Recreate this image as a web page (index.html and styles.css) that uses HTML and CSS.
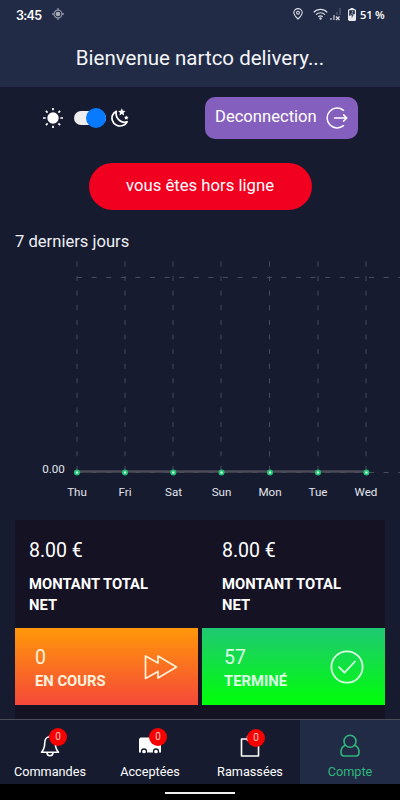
FILE: index.html
```html
<!DOCTYPE html>
<html lang="fr">
<head>
    <meta charset="UTF-8">
    <meta name="viewport" content="width=device-width, initial-scale=1.0">
    <title>Compte</title>
    <link rel="stylesheet" href="styles.css">
</head>
<body>
    <div class="app">
        <header class="header">
            <div class="status-bar">
                <span class="clock">3:45</span>
                <svg class="gps" width="12" height="12" viewBox="0 0 12 12">
                    <circle cx="6" cy="6" r="3.9" fill="none" stroke="#8f94a5" stroke-width="1.2"/>
                    <circle cx="6" cy="6" r="2.3" fill="#a9adba"/>
                    <path d="M6 0v2M6 10v2M0 6h2M10 6h2" stroke="#8f94a5" stroke-width="1.3"/>
                </svg>
                <div class="status-icons">
                    <svg class="pin" width="10" height="12" viewBox="0 0 10 12" fill="none" stroke="#d9dce6" stroke-width="1.1">
                        <path d="M5 11C2.5 8.5.8 6.5.8 4.7a4.2 4.1 0 0 1 8.4 0C9.2 6.5 7.5 8.5 5 11z"/>
                        <circle cx="5" cy="4.7" r="1.4"/>
                    </svg>
                    <svg class="wifi" width="15" height="12" viewBox="0 0 15 12" fill="none" stroke="#d9dce6" stroke-width="1.2">
                        <path d="M.7 4.4C4.5.4 10.5.4 14.3 4.4M3 6.7c2.6-2.6 6.4-2.6 9 0M5.3 8.8c1.3-1.2 3.1-1.2 4.4 0"/>
                        <circle cx="7.5" cy="10.5" r=".6" fill="#d9dce6"/>
                    </svg>
                    <svg class="signal" width="12" height="13" viewBox="0 0 12 13" fill="none">
                        <path d="M1 10v2M4 7v5" stroke="#c0c4d0" stroke-width="1.3"/>
                        <path d="M7 4v3M10 0v7" stroke="#535b73" stroke-width="1.3"/>
                        <path d="M6 8.5l3.5 3.5M9.5 8.5L6 12" stroke="#d9dce6" stroke-width="1.2"/>
                    </svg>
                    <svg class="battery" width="8" height="13" viewBox="0 0 8 13">
                        <path d="M2.5 0h3v1.5h-3z" fill="#e8eaf0"/>
                        <rect x=".6" y="1.6" width="6.8" height="10.8" rx="1" fill="none" stroke="#e8eaf0" stroke-width="1.2"/>
                        <path d="M1 8l6-2v6H1z" fill="#e8eaf0"/>
                        <path d="M4.8 3L2.3 7.5h1.5L3.5 11l2.4-4.5H4.4z" fill="#222b45" stroke="#e8eaf0" stroke-width=".4"/>
                    </svg>
                    <span class="percent">51 %</span>
                </div>
            </div>
            <h1 class="title">Bienvenue nartco delivery...</h1>
        </header>

        <main class="content">
            <div class="toolbar">
                <div class="theme-switch">
                    <svg class="sun" width="20" height="20" viewBox="0 0 20 20">
                        <circle cx="10" cy="10" r="5.7" fill="#fff"/>
                        <path d="M10 0v2.2M10 17.8V20M0 10h2.7M17.3 10H20M2.9 2.9l1.7 1.7M15.4 15.4l1.7 1.7M2.9 17.1l1.7-1.7M15.4 4.6l1.7-1.7" stroke="#fff" stroke-width="1.7"/>
                    </svg>
                    <span class="switch"><span class="knob"></span></span>
                    <svg class="moon" width="18" height="20" viewBox="0 0 18 20">
                        <path d="M5.3 3.4C1.7 5 .3 9 1.3 12.2c1.3 4.6 6.6 7 11 5.1 1.7-.7 3-2 3.8-3.5-2.5 1-5.3.5-7.5-1.3-2.7-2.2-3.9-5.7-3.3-9.1z" fill="none" stroke="#fff" stroke-width="1.7" stroke-linejoin="round"/>
                        <path d="M10.8.3l1.1 2.4 2.6.3-1.9 1.8.5 2.6-2.3-1.3-2.3 1.3.5-2.6L7.1 3l2.6-.3z" fill="#fff"/>
                        <path d="M15.3 7.5l.7 1.3 1.5.2-1 1.1.2 1.5-1.4-.7-1.4.7.2-1.5-1-1.1 1.5-.2z" fill="#fff"/>
                    </svg>
                </div>
                <button class="logout">
                    <span>Deconnection</span>
                    <svg width="22" height="22" viewBox="0 0 22 22" fill="none" stroke="#fff" stroke-width="1.5" stroke-linecap="round" stroke-linejoin="round">
                        <path d="M17.5 3.3A10 10 0 1 0 17.5 18.7"/>
                        <path d="M8.5 11h12.3M17.6 7.9l3.2 3.1-3.2 3.1"/>
                    </svg>
                </button>
            </div>

            <button class="offline">vous êtes hors ligne</button>

            <h2 class="chart-title">7 derniers jours</h2>
            <svg class="chart" width="400" height="250" viewBox="0 0 400 250">
                <g class="grid">
                    <path d="M77 6.5V217M125 6.5V217M173 6.5V217M221 6.5V217M269.5 6.5V217M318 6.5V217M366 6.5V217"/>
                    <path d="M77 22.5H400M77 217.5H400"/>
                </g>
                <path class="line" d="M77 216.5H366"/>
                <g class="dots">
                    <circle cx="77" cy="217.5" r="2.2"/>
                    <circle cx="125" cy="217.5" r="2.2"/>
                    <circle cx="173.3" cy="217.5" r="2.2"/>
                    <circle cx="221.5" cy="217.5" r="2.2"/>
                    <circle cx="270" cy="217.5" r="2.2"/>
                    <circle cx="318" cy="217.5" r="2.2"/>
                    <circle cx="366.4" cy="217.5" r="2.2"/>
                </g>
                <g class="labels">
                    <text x="53.5" y="217.5">0.00</text>
                    <text x="77" y="240.5">Thu</text>
                    <text x="125" y="240.5">Fri</text>
                    <text x="173.5" y="240.5">Sat</text>
                    <text x="221.5" y="240.5">Sun</text>
                    <text x="270" y="240.5">Mon</text>
                    <text x="318" y="240.5">Tue</text>
                    <text x="366" y="240.5">Wed</text>
                </g>
            </svg>

            <section class="stats">
                <div class="totals">
                    <div class="total">
                        <div class="value">8.00 €</div>
                        <div class="label">MONTANT TOTAL NET</div>
                    </div>
                    <div class="total">
                        <div class="value">8.00 €</div>
                        <div class="label">MONTANT TOTAL NET</div>
                    </div>
                </div>
                <div class="cards">
                    <div class="card card-progress">
                        <div class="card-text">
                            <div class="value">0</div>
                            <div class="label">EN COURS</div>
                        </div>
                        <svg width="34" height="26" viewBox="0 0 34 26" fill="none" stroke="#fff0d8" stroke-width="1.7" stroke-linejoin="round">
                            <path d="M1.5 2v22.5L14 17.5V24l18.5-11L14 2v7z"/>
                        </svg>
                    </div>
                    <div class="card card-done">
                        <div class="card-text">
                            <div class="value">57</div>
                            <div class="label">TERMINÉ</div>
                        </div>
                        <svg width="34" height="34" viewBox="0 0 34 34" fill="none" stroke="#d8ffe4" stroke-width="1.8" stroke-linecap="round" stroke-linejoin="round">
                            <circle cx="17" cy="17" r="15.6"/>
                            <path d="M9 17.2l5.5 5.5L25 11.5"/>
                        </svg>
                    </div>
                </div>
            </section>
        </main>

        <nav class="tabs">
            <div class="tab">
                <div class="tab-icon">
                    <svg width="20" height="24" viewBox="0 0 20 24" fill="none" stroke="#fff" stroke-width="1.6" stroke-linejoin="round">
                        <path d="M10 2.5V1M10 2.8C6.5 2.8 4.7 5.5 4.7 9c0 5-1 6.8-3.2 9.2h17c-2.2-2.4-3.2-4.2-3.2-9.2 0-3.5-1.8-6.2-5.3-6.2z"/>
                        <path d="M7 18.5a3 3.2 0 0 0 6 0"/>
                    </svg>
                    <span class="badge">0</span>
                </div>
                <span>Commandes</span>
            </div>
            <div class="tab">
                <div class="tab-icon">
                    <svg width="24" height="24" viewBox="0 0 24 24">
                        <path d="M2.5 3.5H15V6h4.5l3.5 5v7.5H1V5z" fill="#fff"/>
                        <circle cx="6" cy="17.5" r="2.5" fill="#fff" stroke="#171b2f" stroke-width="1.3"/>
                        <circle cx="18" cy="17.5" r="2.5" fill="#fff" stroke="#171b2f" stroke-width="1.3"/>
                    </svg>
                    <span class="badge">0</span>
                </div>
                <span>Acceptées</span>
            </div>
            <div class="tab">
                <div class="tab-icon">
                    <svg width="20" height="24" viewBox="0 0 20 24" fill="none" stroke="#fff" stroke-width="1.6" stroke-linejoin="round">
                        <path d="M7.5 5h-6v17h17V5H13M7.5 2.5H13v4H7.5z"/>
                    </svg>
                    <span class="badge badge-low">0</span>
                </div>
                <span>Ramassées</span>
            </div>
            <div class="tab active">
                <div class="tab-icon">
                    <svg width="20" height="24" viewBox="0 0 20 24" fill="none" stroke="#2eb77c" stroke-width="1.6" stroke-linejoin="round">
                        <circle cx="10" cy="7.3" r="6"/>
                        <path d="M5.3 11.2C2.2 12.3 1 15 1 18.3c0 2.6 1 3.7 3 3.7h12c2 0 3-1.1 3-3.7 0-3.3-1.2-6-4.3-7.1"/>
                    </svg>
                </div>
                <span>Compte</span>
            </div>
        </nav>
        <div class="system-bar"><span class="handle"></span></div>
    </div>
</body>
</html>
```

FILE: styles.css
```css
* {
    box-sizing: border-box;
}

body {
    margin: 0;
    background: #171b2f;
    color: #fff;
    font-family: Roboto, "Liberation Sans", sans-serif;
}

.app {
    width: 400px;
    height: 800px;
    display: flex;
    flex-direction: column;
    overflow: hidden;
}

/* header */
.header {
    height: 88px;
    flex: none;
    background: #222b45;
    border-bottom: 1px solid #171733;
}

.status-bar {
    height: 28px;
    display: flex;
    align-items: center;
    padding: 0 15px 0 16px;
}

.clock {
    width: 36px;
    font: 600 12.5px Inter, sans-serif;
    letter-spacing: -0.7px;
    padding-top: 2px;
}

.status-icons {
    display: flex;
    align-items: center;
    margin-left: auto;
}

.wifi {
    margin-left: 10px;
}

.signal {
    margin-left: 2px;
}

.battery {
    margin-left: 6px;
}

.percent {
    width: 25px;
    margin-left: 4px;
    font: 600 11.2px "Open Sans", sans-serif;
    letter-spacing: -0.2px;
    white-space: nowrap;
}

.title {
    margin: 18px 0 0;
    font-size: 20.5px;
    line-height: 24px;
    font-weight: 400;
    text-align: center;
    color: #f3f5fa;
}

/* content */
.content {
    flex: 1;
    min-height: 0;
    overflow: hidden;
    display: flex;
    flex-direction: column;
}

.toolbar {
    height: 42px;
    flex: none;
    margin: 9px 42px 0 43px;
    display: flex;
    align-items: center;
    justify-content: space-between;
}

.theme-switch {
    display: flex;
    align-items: center;
}

.switch {
    width: 32px;
    height: 14px;
    margin: 0 5px 0 11px;
    border-radius: 7px;
    background: #eee;
    display: flex;
    align-items: center;
    justify-content: flex-end;
}

.knob {
    width: 20px;
    height: 20px;
    border-radius: 50%;
    background: #077aff;
}

.logout {
    width: 153px;
    height: 42px;
    padding: 0 10px;
    border: 0;
    border-radius: 10px;
    background: #855fbe;
    color: #fff;
    font: 400 16.6px Roboto, sans-serif;
    display: flex;
    align-items: center;
    justify-content: space-between;
}

.logout span {
    padding-bottom: 3px;
}

.offline {
    width: 223px;
    height: 47px;
    flex: none;
    margin: 24px auto 0;
    padding: 0 0 2px;
    border: 0;
    border-radius: 24px;
    background: #f10020;
    color: #fff;
    font: 400 16.7px Roboto, sans-serif;
}

.chart-title {
    margin: 22px 0 0 15px;
    font-size: 16.6px;
    line-height: 20px;
    font-weight: 400;
    color: #eef0f5;
}

.chart {
    flex: none;
    margin-top: 3px;
}

.grid path {
    fill: none;
    stroke: #474b5d;
    stroke-width: 1;
    stroke-dasharray: 5 9.6;
}

.line {
    stroke: #4b4b59;
    stroke-width: 2.6;
}

.dots circle {
    fill: #b5f5d0;
    stroke: #20bd72;
    stroke-width: 1.7;
}

.labels text {
    fill: #e3e5ec;
    font-size: 11.6px;
    text-anchor: middle;
}

/* stats */
.stats {
    flex: none;
    height: 220px;
    margin: 15px 15px 0;
    background: #151224;
}

.totals {
    height: 108px;
    display: grid;
    grid-template-columns: 1fr 1fr;
}

.total {
    padding: 19px 40px 0 14px;
}

.total + .total {
    padding-left: 22px;
}

.value {
    font-size: 19.5px;
    line-height: 24px;
    font-weight: 400;
}

.label {
    font-size: 14.8px;
    line-height: 20.5px;
    font-weight: 700;
}

.total .label {
    margin-top: 11px;
}

.cards {
    display: grid;
    grid-template-columns: 183px 183px;
    justify-content: space-between;
}

.card {
    height: 77px;
    padding: 0 20px;
    display: flex;
    align-items: center;
    justify-content: space-between;
}

.card-text {
    padding-top: 5px;
}

.card .label {
    line-height: 22px;
}

.card-progress {
    background: linear-gradient(#ff9809, #f5483a);
    color: #fff2dd;
}

.card-done {
    padding-left: 22px;
    padding-right: 21px;
    background: linear-gradient(#20c873, #00ff08);
    color: #dcffe5;
}

/* bottom tabs */
.tabs {
    flex: none;
    height: 65px;
    display: flex;
    border-top: 1px solid #4c4d5b;
    background: #171b2f;
}

.tab {
    flex: 1;
    display: flex;
    flex-direction: column;
    align-items: center;
    padding-top: 14px;
    font-size: 12.7px;
    line-height: 16px;
}

.tab.active {
    background: #222b45;
    color: #2eb77c;
}

.tab-icon {
    position: relative;
    height: 24px;
    margin-bottom: 6px;
}

.tab-icon svg {
    display: block;
}

.badge {
    position: absolute;
    top: -6px;
    left: 50%;
    margin-left: -1px;
    width: 18px;
    height: 18px;
    border-radius: 50%;
    background: #f80000;
    color: #ffc9c9;
    font-size: 10px;
    line-height: 18px;
    text-align: center;
}

.badge-low {
    top: -5px;
    margin-left: -3px;
}

.system-bar {
    flex: none;
    height: 16px;
    background: #000;
    display: flex;
    align-items: center;
    justify-content: center;
}

.handle {
    width: 70px;
    height: 2px;
    margin-top: 2px;
    background: #f0f0f0;
}
```
